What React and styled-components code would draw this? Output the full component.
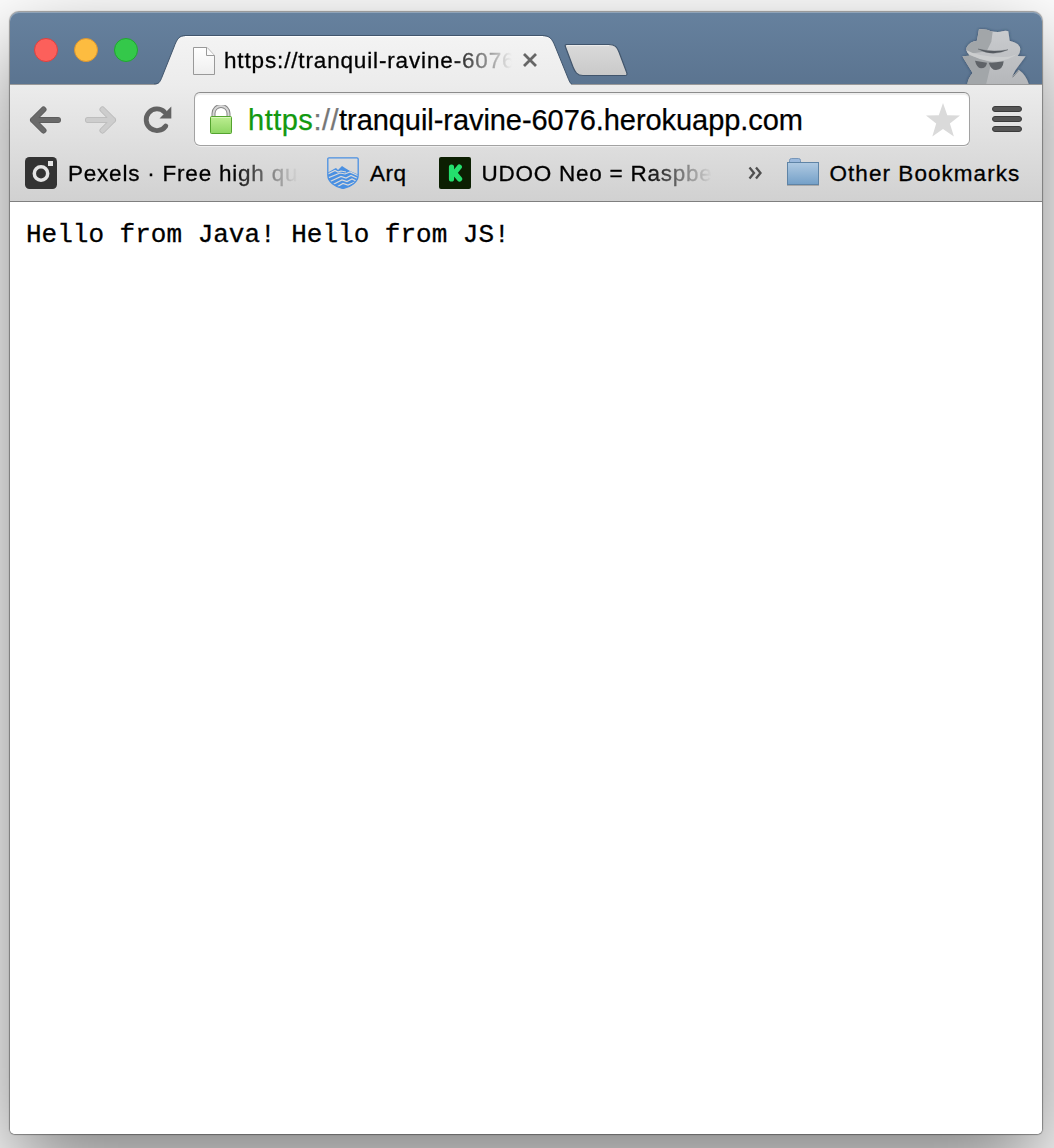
import React from "react";
import styled, { createGlobalStyle } from "styled-components";

const sans = `"Liberation Sans", Arial, sans-serif`;

const GlobalStyle = createGlobalStyle`
  * { box-sizing: border-box; }
  body { margin: 0; background: #fff; font-family: ${sans}; }
  svg { display: block; flex: none; }
`;

const Desktop = styled.div`
  height: 1148px;
  padding: 12px 12px 14px 10px;
  overflow: hidden;
  background: #fff;
`;

const Window = styled.div`
  display: flex;
  flex-direction: column;
  height: 1122px;
  border-radius: 9px 9px 5px 5px;
  background: #fff;
  box-shadow: 0 0 1px 1px rgba(0, 0, 0, 0.36), 0 36px 90px rgba(0, 0, 0, 0.5);
`;

const TitleBar = styled.header`
  display: flex;
  align-items: flex-start;
  height: 72px;
  padding: 0 12px 0 24px;
  border-radius: 9px 9px 0 0;
  background: linear-gradient(#66819e, #5b7490);
  box-shadow: inset 0 1px 0 #91a4b8;
`;

const Lights = styled.div`
  display: flex;
  gap: 16px;
  padding-top: 26px;
`;

const Light = styled.span`
  width: 24px;
  height: 24px;
  border-radius: 50%;
  border: 1px solid ${(p) => p.$rim};
  background: ${(p) => p.$fill};
`;

const Tab = styled.div`
  position: relative;
  display: flex;
  align-items: center;
  width: 418px;
  height: 50px;
  margin: 23px 0 0 16px;
  padding: 0 0 0 39px;
`;

const TabShape = styled.svg`
  position: absolute;
  inset: 0;
`;

const Label = styled.span`
  padding-top: 2px;
  font-size: 22.5px;
  line-height: 30px;
  letter-spacing: ${(p) => p.$spacing}px;
  white-space: nowrap;
  color: #000;
  -webkit-text-stroke: 0.3px currentColor;
`;

const Fading = styled(Label)`
  width: ${(p) => p.$width}px;
  mask-image: linear-gradient(to right, #000 calc(100% - ${(p) => p.$fade}px), transparent);
`;

const TabContent = styled.div`
  position: relative;
  display: flex;
  align-items: center;
`;

const TabTitle = styled(Fading)`
  margin-left: 8px;
`;

const CloseIcon = styled.svg`
  margin-left: 10px;
`;

const NewTab = styled.svg`
  margin: 30px 0 0 -9px;
`;

const Incognito = styled.svg`
  margin: 15px 0 0 auto;
`;

const Chrome = styled.div`
  height: 118px;
  border-top: 1px solid #999;
  border-bottom: 1px solid #7f7f7f;
  background: linear-gradient(#ececec, #d1d1d1);
`;

const Toolbar = styled.div`
  display: flex;
  align-items: center;
  height: 61px;
  padding: 7px 19px 0 19px;
`;

const NavButtons = styled.div`
  display: flex;
  align-items: center;
  width: 165px;
  gap: 22px;
  padding-top: 1px;
`;

const Omnibox = styled.div`
  display: flex;
  align-items: center;
  width: 776px;
  height: 54px;
  padding: 2px 8px 0 14px;
  border: 1px solid #a2a2a2;
  border-top-color: #8c8c8c;
  border-radius: 6px;
  background: #fff;
  box-shadow: inset 0 2px 1px #eee, 0 1px 0 #eee;
`;

const Url = styled.span`
  flex: 1;
  margin-left: 15px;
  font-size: 29px;
  line-height: 40px;
  letter-spacing: -0.06px;
  white-space: nowrap;
  color: #000;
  -webkit-text-stroke: 0.25px currentColor;
`;

const Secure = styled.span`
  letter-spacing: 0.5px;
  color: #12990f;
`;

const Separator = styled.span`
  letter-spacing: 0.5px;
  color: #777;
`;

const MenuIcon = styled.svg`
  margin-left: 21px;
`;

const Bookmarks = styled.nav`
  display: flex;
  align-items: center;
  height: 54px;
  padding: 0 15px 0 15px;
`;

const Bookmark = styled.div`
  display: flex;
  align-items: center;
  gap: 11px;
  margin-right: ${(p) => p.$after || 0}px;
`;

const Page = styled.main`
  flex: 1;
  padding: 17px 16px 16px;
  border-radius: 0 0 5px 5px;
  background: #fff;
`;

const Output = styled.pre`
  margin: 0;
  font: 26px/32px "Liberation Mono", "Courier New", monospace;
  color: #000;
  -webkit-text-stroke: 0.3px currentColor;
`;

function DocumentIcon() {
  return (
    <svg width="23" height="29" viewBox="0 0 23 29">
      <defs>
        <linearGradient id="doc" x2="0" y2="1">
          <stop stopColor="#fff" />
          <stop offset="1" stopColor="#eee" />
        </linearGradient>
      </defs>
      <path d="M.5 1.500H14L21.500 9.500V28.500H.5Z" fill="url(#doc)" stroke="#999" />
      <path d="M13.500 1.500V9.500H21.500" fill="#fafafa" stroke="#999" />
    </svg>
  );
}

function ReloadIcon() {
  return (
    <ReloadSvg width="30" height="30" viewBox="0 0 30 30">
      <path d="M22.800 21A10.800 10.800 0 1 1 21.500 7" fill="none" stroke="#626262" strokeWidth="4.800" strokeLinecap="round" />
      <path d="M28.300 1.500V13.500H16.500Z" fill="#626262" />
    </ReloadSvg>
  );
}

const ReloadSvg = styled.svg`
  margin-left: 4px;
`;

function ArrowIcon({ color, edge, flip }) {
  return (
    <svg width="33" height="30" viewBox="0 0 33 30">
      <g transform={flip ? "translate(33 0) scale(-1 1)" : undefined} fill="none" strokeLinecap="round" strokeLinejoin="round">
        <path d="M14.500 4.500L4 15L14.500 25.500M4 15H29" stroke={edge} strokeWidth="6" />
        <path d="M14.500 4.500L4 15L14.500 25.500M4 15H29" stroke={color} strokeWidth="4.500" />
      </g>
    </svg>
  );
}

function LockIcon() {
  return (
    <svg width="24" height="30" viewBox="0 0 24 30">
      <defs>
        <linearGradient id="lock" x2="0" y2="1">
          <stop stopColor="#bdee92" />
          <stop offset="1" stopColor="#8ed663" />
        </linearGradient>
      </defs>
      <path d="M4.500 12V8.500a7.500 7.500 0 0 1 15 0V12" fill="none" stroke="#868686" strokeWidth="4" />
      <path d="M4.500 12V8.500a7.500 7.500 0 0 1 15 0V12" fill="none" stroke="#d6d6d6" strokeWidth="2" />
      <rect x="1.500" y="11.500" width="21" height="17" rx="1" fill="url(#lock)" stroke="#54a32f" />
      <path d="M2.500 12.500H21.500" stroke="#d8f8bd" />
    </svg>
  );
}

function StarIcon() {
  return (
    <svg width="36" height="36" viewBox="0 0 36 36">
      <path d="M18 1L22.300 13.200L35 13.500L24.900 21.500L28.900 34.500L18 27L7.300 34.500L11.200 21.500L1 13.500L13.800 13.200Z" fill="#dadada" />
    </svg>
  );
}

function PexelsIcon() {
  return (
    <svg width="32" height="32" viewBox="0 0 32 32">
      <rect width="32" height="32" rx="4.500" fill="#333" />
      <circle cx="16" cy="16.500" r="6.700" fill="none" stroke="#e4e4e4" strokeWidth="3.500" />
      <rect x="23" y="4" width="5" height="5" fill="#e4e4e4" />
    </svg>
  );
}

function ArqIcon() {
  return (
    <svg width="32" height="32" viewBox="0 0 32 32">
      <defs>
        <clipPath id="shield">
          <path d="M1 1H31V18C31 25 24 30 16 31.500C8 30 1 25 1 18Z" />
        </clipPath>
      </defs>
      <g clipPath="url(#shield)">
        <path d="M0 16L7 12L9 11L11 13L15 9L18 11L23 14L32 18V33H0Z" fill="#4a90e2" />
        <g fill="none" stroke="#dadada" strokeWidth="1.200">
          <path d="M1 17L8 13.500L11 15L14 14L19 15" />
          <path d="M1 21L13 16L18 17L23 15L32 19" />
          <path d="M2 25L14 19.500L19 21L24 18.500L32 22" />
          <path d="M4 28.500L15 23L20 24.500L25 22L31 25" />
          <path d="M8 31L16 26.500L21 28L28 25" />
        </g>
      </g>
      <path d="M.8 2Q.8 .8 2 .8H30Q31.200 .8 31.200 2V18C31.200 25 24 30 16 31.500C8 30 .8 25 .8 18Z" fill="none" stroke="#4a90e2" strokeWidth="1.300" />
    </svg>
  );
}

function KickstarterIcon() {
  return (
    <svg width="32" height="32" viewBox="0 0 32 32">
      <rect width="32" height="32" rx="2" fill="#0c1f02" />
      <path d="M12.500 10V22M20.300 10L15.500 16L20.600 22" fill="none" stroke="#24df6d" strokeWidth="5.200" strokeLinecap="round" strokeLinejoin="round" />
    </svg>
  );
}

function FolderIcon() {
  return (
    <svg width="32" height="32" viewBox="0 0 32 32">
      <defs>
        <linearGradient id="folder" x2="0" y2="1">
          <stop stopColor="#b0cae2" />
          <stop offset="1" stopColor="#74a0c8" />
        </linearGradient>
      </defs>
      <path d="M2.500 6V3.500Q2.500 1.500 4.500 1.500H11.500Q13.500 1.500 13.500 3.500V6" fill="#9bb9dc" stroke="#7696b9" />
      <rect x=".5" y="5.500" width="31" height="22" fill="url(#folder)" stroke="#5f84a6" />
      <path d="M0 28.500H32" stroke="#aaa" />
    </svg>
  );
}

function IncognitoIcon() {
  return (
    <Incognito width="70" height="57" viewBox="90 81 210 171">
      <defs>
        <filter id="spyShadow" x="-10%" y="-10%" width="120%" height="120%">
          <feDropShadow dx="0" dy="0" stdDeviation="4" floodColor="#1c2c40" floodOpacity=".6" />
        </filter>
        <linearGradient id="spy" x2="0" y2="1">
          <stop stopColor="#cbcdd0" />
          <stop offset="1" stopColor="#b5b7ba" />
        </linearGradient>
        <clipPath id="spyBody">
          <path d="M147 88Q169 86 183 94Q207 98 216 94Q228 91 235 94L239 122Q270 129 271 148Q271 158 263 168L287 169L256 211L246 231L266 209Q289 225 297 254H112Q114 235 128 219L97 169L119 167Q104 149 112 139Q119 126 141 122Z" />
        </clipPath>
      </defs>
      <g filter="url(#spyShadow)">
        <g clipPath="url(#spyBody)">
          <rect x="90" y="80" width="210" height="175" fill="url(#spy)" />
          <path d="M90 80H190L184 125L170 154L111 163L184 187L168 255H90Z" fill="#a2a6a9" />
          <path d="M108 157Q145 181 185 184Q240 185 271 153Q255 172 215 171Q145 171 108 150Z" fill="#cccecf" />
        </g>
      </g>
      <path d="M144 147Q188 171 234 149Q190 158 144 147Z" fill="#555a60" stroke="#555a60" strokeWidth="1" />
      <path d="M135 182L171 188Q169 205 153 205Q140 203 135 182ZM176 188Q198 188 221 184Q219 209 198 210Q183 210 176 188Z" fill="#5f6368" />
      <path d="M248 232L266 212" stroke="#80858a" strokeWidth="3" />
    </Incognito>
  );
}

export default function App() {
  return (
    <Desktop>
      <GlobalStyle />
      <Window>
        <TitleBar>
          <Lights>
            <Light $fill="#fc605b" $rim="#dd403e" />
            <Light $fill="#fdbc40" $rim="#dc9530" />
            <Light $fill="#34c84a" $rim="#20a72f" />
          </Lights>
          <Tab>
            <TabShape width="418" height="50" viewBox="0 0 418 50">
              <defs>
                <linearGradient id="tab" x2="0" y2="1">
                  <stop stopColor="#f3f3f3" />
                  <stop offset="1" stopColor="#ececec" />
                </linearGradient>
              </defs>
              <path d="M0 49.500C5 49.500 6 47 8 42L20 12C23 4 25 1 32 1H388C396 1 398 4 401 11L414 43C416 48 417 49.500 418 49.500V50H0Z" fill="url(#tab)" />
              <path d="M0 49C5 49 6 47 8 42L20 12C23 4 25 .5 32 .5H388C396 .5 398 4 401 11L414 43C416 48 417 49 418 49" fill="none" stroke="#41556c" strokeWidth="1" />
              <path d="M31 1.500H389" stroke="#fff" />
            </TabShape>
            <TabContent>
              <DocumentIcon />
              <TabTitle $width={288} $spacing={0.85} $fade={62}>https://tranquil-ravine-6076</TabTitle>
              <CloseIcon width="16" height="16" viewBox="0 0 16 16">
                <path d="M2 2L14 14M14 2L2 14" stroke="#666" strokeWidth="2.800" />
              </CloseIcon>
            </TabContent>
          </Tab>
          <NewTab width="66" height="36" viewBox="0 0 66 36">
            <defs>
              <linearGradient id="newTab" x2="0" y2="1">
                <stop stopColor="#dadada" />
                <stop offset="1" stopColor="#c9c9c9" />
              </linearGradient>
            </defs>
            <path d="M3.500 2.500H46C52 2.500 54 5 56 10L63.500 30Q65 33.500 62 33.500H20C14 33.500 12 30 10 25L2.500 5Q1.500 2.500 3.500 2.500Z" fill="url(#newTab)" stroke="#41556c" strokeWidth="1.200" />
            <path d="M4 3.600H46" stroke="#ededed" />
          </NewTab>
          <IncognitoIcon />
        </TitleBar>
        <Chrome>
          <Toolbar>
            <NavButtons>
              <ArrowIcon color="#6a6a6a" edge="#5a5a5a" />
              <ArrowIcon color="#cdcdcd" edge="#b8b8b8" flip />
              <ReloadIcon />
            </NavButtons>
            <Omnibox>
              <LockIcon />
              <Url>
                <Secure>https</Secure>
                <Separator>://</Separator>
                tranquil-ravine-6076.herokuapp.com
              </Url>
              <StarIcon />
            </Omnibox>
            <MenuIcon width="32" height="28" viewBox="0 0 32 28">
              <g fill="#555" stroke="#3c3c3c">
                <rect x="1.500" y="1.500" width="29" height="5" rx="2.500" />
                <rect x="1.500" y="11.500" width="29" height="5" rx="2.500" />
                <rect x="1.500" y="21.500" width="29" height="5" rx="2.500" />
              </g>
            </MenuIcon>
          </Toolbar>
          <Bookmarks>
            <Bookmark $after={29}>
              <PexelsIcon />
              <Fading $width={230} $spacing={0.78} $fade={66}>Pexels · Free high qu</Fading>
            </Bookmark>
            <Bookmark $after={32}>
              <ArqIcon />
              <Label $spacing={0.5}>Arq</Label>
            </Bookmark>
            <Bookmark $after={36}>
              <KickstarterIcon />
              <Fading $width={230} $spacing={0.75} $fade={66}>UDOO Neo = Raspbe</Fading>
            </Bookmark>
            <Bookmark $after={24}>
              <svg width="15" height="14" viewBox="0 0 15 14">
                <path d="M1.500 1.500L6 7L1.500 12.500M8 1.500L12.500 7L8 12.500" fill="none" stroke="#505050" strokeWidth="2.300" />
              </svg>
            </Bookmark>
            <Bookmark>
              <FolderIcon />
              <Label $spacing={1.05}>Other Bookmarks</Label>
            </Bookmark>
          </Bookmarks>
        </Chrome>
        <Page>
          <Output>Hello from Java! Hello from JS!</Output>
        </Page>
      </Window>
    </Desktop>
  );
}
